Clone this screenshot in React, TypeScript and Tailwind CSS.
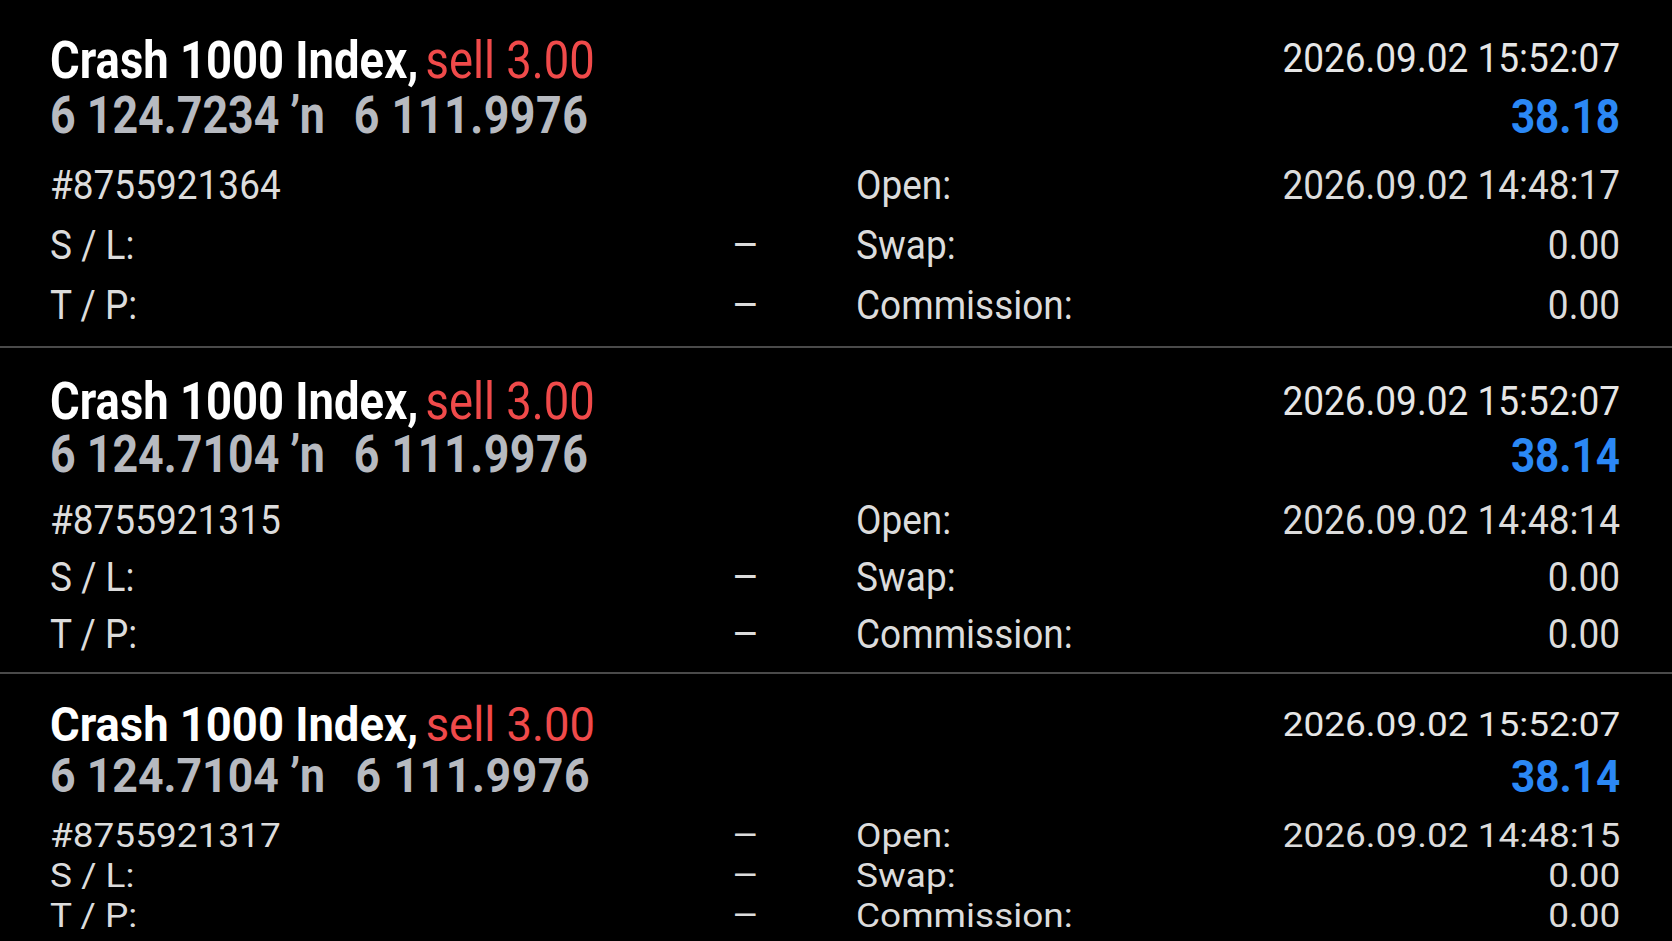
type Deal = {
  id: string;
  price: string;
  profit: string;
  open: string;
  closed: string;
};

const deals: Deal[] = [
  { id: '#8755921364', price: '6 124.7234', profit: '38.18', open: '2026.09.02 14:48:17', closed: '2026.09.02 15:52:07' },
  { id: '#8755921315', price: '6 124.7104', profit: '38.14', open: '2026.09.02 14:48:14', closed: '2026.09.02 15:52:07' },
  { id: '#8755921317', price: '6 124.7104', profit: '38.14', open: '2026.09.02 14:48:15', closed: '2026.09.02 15:52:07' },
];

// each card sits a little tighter than the one above it (the last one is squeezed)
const sizes = [
  {
    pt: 'pt-[33px]', pb: 'pb-[10px]',
    head1: 'h-[55px] leading-[55px]', head2: 'h-[56px] leading-[56px]',
    date: 'leading-[51px]', gap: 'mt-[12px]', line: 'h-[60px] leading-[59px]',
    title: 'text-[51px] scale-x-[0.89]', price: 'text-[51px] scale-x-[0.877]',
    small: 'text-[40px] scale-x-[0.925]', dash: 'text-[40px] scale-x-[1.05]', profit: 'text-[48px] scale-x-[0.88]',
  },
  {
    pt: 'pt-[27px]', pb: 'pb-[9px]',
    head1: 'h-[53px] leading-[53px]', head2: 'h-[53px] leading-[53px]',
    date: 'leading-[53px]', gap: 'mt-[11px]', line: 'h-[57px] leading-[57px]',
    title: 'text-[51px] scale-x-[0.89]', price: 'text-[51px] scale-x-[0.877]',
    small: 'text-[40px] scale-x-[0.925]', dash: 'text-[40px] scale-x-[1.05]', profit: 'text-[48px] scale-x-[0.88]',
  },
  {
    pt: 'pt-[25px]', pb: 'pb-[10px]',
    head1: 'h-[51px] leading-[51px]', head2: 'h-[51px] leading-[51px]',
    date: 'leading-[51px]', gap: 'mt-[14px]', line: 'h-[40px] leading-[40px]',
    title: 'text-[48px] scale-x-[0.945]', price: 'text-[48px] scale-x-[0.93]',
    small: 'text-[34px] scale-x-[1.088]', dash: 'text-[34px] scale-x-[1.23]', profit: 'text-[45px] scale-x-[0.94]',
  },
];

type Txt = { children: React.ReactNode; className?: string };

function L({ children, className = '' }: Txt) {
  return <span className={`inline-block whitespace-pre origin-left ${className}`}>{children}</span>;
}

function R({ children, className = '' }: Txt) {
  return <span className={`inline-block whitespace-pre origin-right ${className}`}>{children}</span>;
}

type RowProps = {
  label: string;
  dash: boolean;
  rightLabel: string;
  value: string;
  s: (typeof sizes)[number];
};

function DetailRow({ label, dash, rightLabel, value, s }: RowProps) {
  return (
    <div className={`flex text-[#dcdcdc] ${s.line}`}>
      <div className="w-[709px] flex justify-between">
        <L className={s.small}>{label}</L>
        {dash ? <R className={s.dash}>–</R> : <span />}
      </div>
      <div className="ml-[97px] flex-1 flex justify-between">
        <L className={s.small}>{rightLabel}</L>
        <R className={s.small}>{value}</R>
      </div>
    </div>
  );
}

function DealCard({ deal, idx }: { deal: Deal; idx: number }) {
  const s = sizes[idx];
  const last = idx === 2;
  return (
    <div className={`pl-[50px] pr-[52px] ${s.pt} ${s.pb} ${last ? '' : 'border-b-2 border-[#4a4a4a]'}`}>
      <div className={`flex justify-between items-start ${s.head1}`}>
        <L className={s.title}>
          <span className="font-bold text-white">Crash 1000 Index,</span>
          <span className="ml-[8px] text-[#f04a4a]">sell 3.00</span>
        </L>
        <R className={`text-[#e6e6e6] ${s.small} ${s.date}`}>{deal.closed}</R>
      </div>
      <div className={`flex justify-between items-baseline ${s.head2}`}>
        <L className={`${s.price} font-bold text-[#b7bac0]`}>
          {deal.price}
          <span className="ml-[12px]">ʼn</span>
          <span className="ml-[33px] tracking-[0.6px]">6 111.9976</span>
        </L>
        <R className={`${s.profit} font-bold text-[#2b88f5]`}>{deal.profit}</R>
      </div>
      <div className={s.gap}>
        <DetailRow label={deal.id} dash={last} rightLabel="Open:" value={deal.open} s={s} />
        <DetailRow label="S / L:" dash rightLabel="Swap:" value="0.00" s={s} />
        <DetailRow label="T / P:" dash rightLabel="Commission:" value="0.00" s={s} />
      </div>
    </div>
  );
}

export default function App() {
  return (
    <div className="w-[1672px] h-[941px] overflow-hidden bg-black font-['Roboto',sans-serif]">
      {deals.map((d, i) => (
        <DealCard key={d.id} deal={d} idx={i} />
      ))}
    </div>
  );
}
